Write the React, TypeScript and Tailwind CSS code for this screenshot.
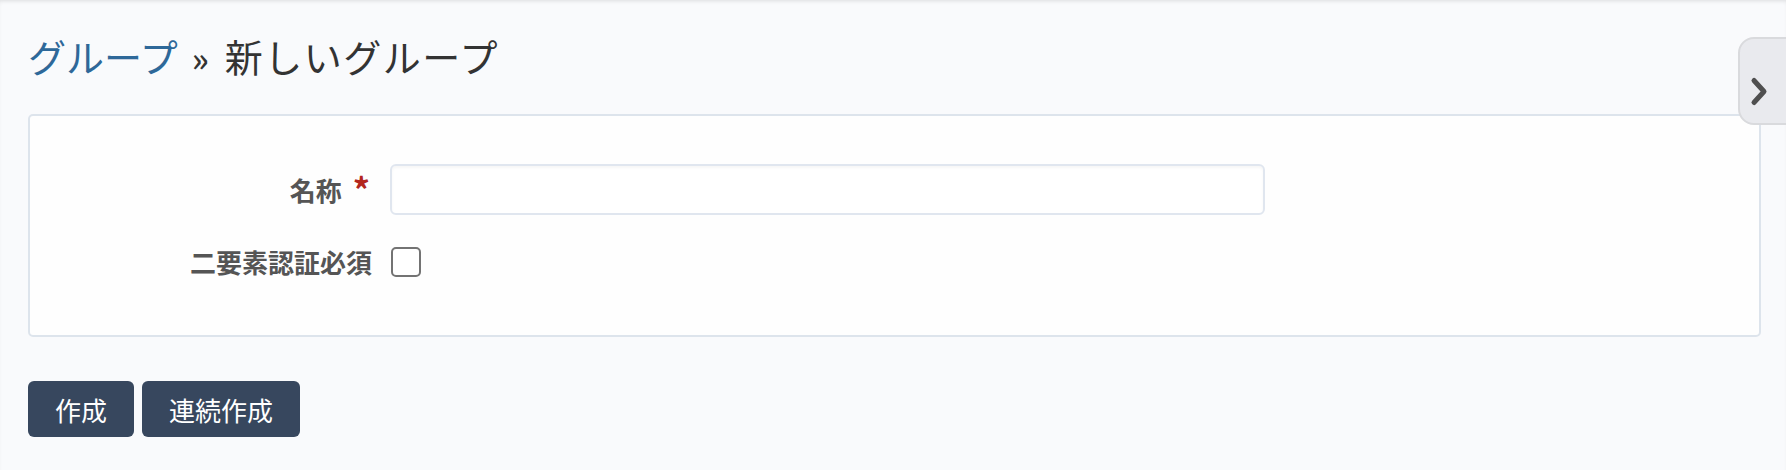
import { useState } from "react";

const jp = { fontFamily: '"Noto Sans CJK JP", "Noto Sans", sans-serif' };

function SidebarTab() {
    return (
        <button
            type="button"
            className="absolute right-[-12px] top-[37px] h-[88px] w-[60px] rounded-l-[16px] border-2 border-[#d9dadd] bg-[#e9eaee] pl-[9px] pt-[22px] text-left"
        >
            <svg width="20" height="32" viewBox="0 0 20 32" fill="none">
                <path d="M5 4.5 L15 15.5 L5 26.5" stroke="#4f4f4f" strokeWidth="5" strokeLinecap="round" strokeLinejoin="round" />
            </svg>
        </button>
    );
}

export default function App() {
    const [name, setName] = useState("");
    const [twofa, setTwofa] = useState(false);

    return (
        <div style={jp} className="relative min-h-[470px] overflow-hidden bg-[#f9fafc] px-[28px] pr-[25px] pt-[33px] shadow-[inset_0_3px_4px_-2px_rgba(0,0,0,0.12)]">
            {/* 見出し */}
            <h2 className="mb-[35px] flex items-center text-[38px] font-normal leading-[46px] text-[#333]">
                <a href="#" className="text-[#2e6899]">グループ</a>
                <span className="ml-[14px] mr-[16px] mt-[4px] text-[34px] font-medium leading-none">»</span>
                <span className="tracking-[1.5px]">新しいグループ</span>
            </h2>

            {/* フォーム */}
            <div className="flex flex-col gap-[21px] rounded-[5px] border-2 border-[#dde4ec] bg-[#fefefe] py-[48px]">
                <div className="flex h-[51px] items-center">
                    <label className="flex w-[342px] items-center justify-end text-[26px] font-bold text-[#555]">
                        名称
                        <span className="ml-[11px] mr-[2px] mt-[-2px] text-[34px] leading-none text-[#b3261e]">*</span>
                    </label>
                    <input
                        type="text"
                        value={name}
                        onChange={(e) => setName(e.target.value)}
                        className="ml-[18px] h-[51px] w-[875px] rounded-[6px] border-2 border-[#e0e6ef] bg-white px-3 text-[26px] shadow-[inset_0_2px_3px_rgba(0,0,0,0.04)] outline-none"
                    />
                </div>
                <div className="flex h-[51px] items-center">
                    <label className="w-[342px] text-right text-[26px] font-bold text-[#555]">二要素認証必須</label>
                    <input
                        type="checkbox"
                        checked={twofa}
                        onChange={(e) => setTwofa(e.target.checked)}
                        className="ml-[19px] h-[30px] w-[30px] appearance-none rounded-[5px] border-2 border-[#737373] bg-white"
                    />
                </div>
            </div>

            {/* ボタン */}
            <div className="mt-[44px] flex gap-[8px]">
                <button type="button" className="flex h-[56px] items-center rounded-[6px] bg-[#37475e] px-[27px] text-[26px] text-white">
                    作成
                </button>
                <button type="button" className="flex h-[56px] items-center rounded-[6px] bg-[#37475e] px-[27px] text-[26px] text-white">
                    連続作成
                </button>
            </div>

            <SidebarTab />
        </div>
    );
}
